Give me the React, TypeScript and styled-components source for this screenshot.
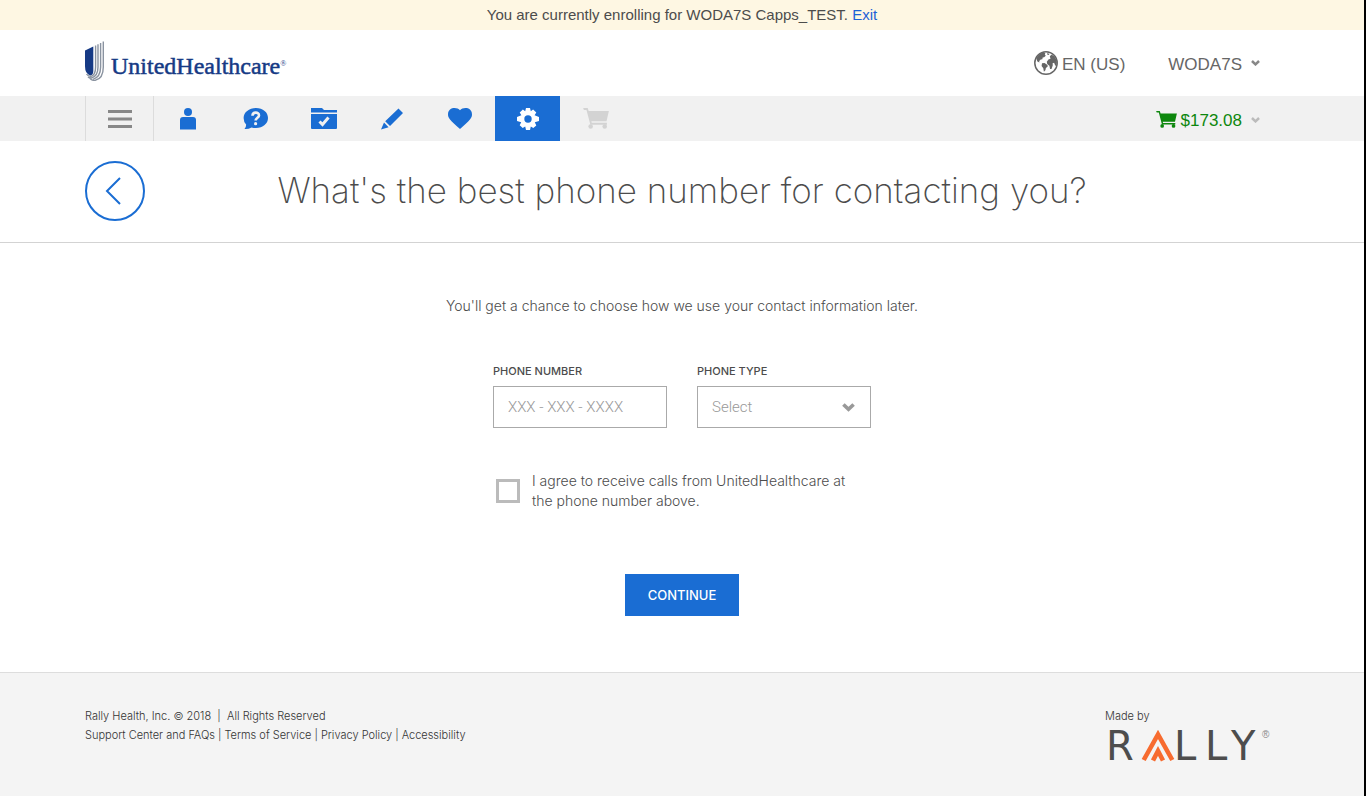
import React from 'react';
import styled, { createGlobalStyle } from 'styled-components';

const blue = '#1a6dd3';
const sans = '"Liberation Sans", Arial, sans-serif';
const light = 'Inter, "Liberation Sans", sans-serif';

const GlobalStyle = createGlobalStyle`
  *, *::before, *::after { box-sizing: border-box; }
  body { margin: 0; background: #fff; color: #4c4c4c; font-family: ${sans}; }
`;

const Page = styled.div`
  min-height: 100vh;
  display: flex;
  flex-direction: column;
  border-right: 2px solid #000;
`;

const Container = styled.div`
  width: 100%;
  max-width: 1234px;
  margin: 0 auto;
  padding: 0 20px;
  display: flex;
`;

const Banner = styled.div`
  height: 30px;
  line-height: 30px;
  background: #fef7e3;
  text-align: center;
  font-size: 15px;
`;

const BannerLink = styled.a`
  color: #1d62d6;
  text-decoration: none;
`;

const HeaderRow = styled(Container)`
  height: 66px;
  align-items: center;
`;

const Brand = styled.a`
  display: flex;
  align-items: center;
  gap: 7px;
  margin-bottom: 4px;
  color: #163a85;
  text-decoration: none;
  font: 24px/32px "Liberation Serif", serif;
  -webkit-text-stroke: 0.5px #163a85;
`;

const BrandName = styled.span`
  padding-top: 10px;
  sup { font-size: 8px; line-height: 8px; vertical-align: 8px; -webkit-text-stroke: 0; }
`;

const HeaderActions = styled.div`
  margin-left: auto;
  margin-right: 19px;
  display: flex;
  align-items: center;
  gap: 43px;
`;

const TextButton = styled.button<{ $tone: string; $gap: number }>`
  display: flex;
  align-items: center;
  gap: ${(p) => p.$gap}px;
  padding: 0;
  border: 0;
  background: none;
  color: ${(p) => p.$tone};
  font: 17px/20px ${sans};
  cursor: pointer;
`;

const ButtonText = styled.span`
  padding-top: 3px;
`;

const NavBar = styled.nav`
  background: #f1f1f1;
`;

const NavRow = styled(Container)`
  height: 45px;
`;

const NavItem = styled.button<{ $active?: boolean; $muted?: boolean }>`
  width: 65px;
  margin-right: 3px;
  padding: 0;
  border: 0;
  display: flex;
  align-items: center;
  justify-content: center;
  background: ${(p) => (p.$active ? blue : 'transparent')};
  color: ${(p) => (p.$active ? '#fff' : p.$muted ? '#d3d3d3' : blue)};
  cursor: pointer;
`;

const MenuItem = styled(NavItem)`
  width: 69px;
  margin-right: 1px;
  border: solid #dcdcdc;
  border-width: 0 1px;
  color: #888;
`;

const CartSummary = styled.div`
  margin-left: auto;
  margin-right: 19px;
  padding-top: 2px;
  display: flex;
`;

const CartTotal = styled.span`
  display: flex;
  align-items: center;
  gap: 4px;
`;

const TitleBar = styled.div`
  border-bottom: 1px solid #d3d3d3;
`;

const TitleRow = styled(Container)`
  height: 101px;
  padding-bottom: 1px;
  align-items: center;
`;

const BackButton = styled.button`
  width: 60px;
  height: 60px;
  padding: 0 4px 0 0;
  border: 2px solid ${blue};
  border-radius: 50%;
  background: #fff;
  color: ${blue};
  display: flex;
  align-items: center;
  justify-content: center;
  cursor: pointer;
`;

const Title = styled.h1`
  flex: 1;
  margin: 0 60px 2px 0;
  text-align: center;
  font: 200 35px/48px ${light};
`;

const Main = styled.main`
  flex: 1;
  display: flex;
  flex-direction: column;
  align-items: center;
  padding: 51px 20px 56px;
`;

const Intro = styled.p`
  margin: 0;
  font: 300 14px/24px ${light};
`;

const Form = styled.form`
  width: 100%;
  max-width: 378px;
  margin-top: 43px;
  display: flex;
  flex-direction: column;
`;

const Fields = styled.div`
  display: grid;
  grid-template-columns: 1fr 1fr;
  gap: 30px;
`;

const Field = styled.div`
  position: relative;
  display: flex;
  flex-direction: column;
`;

const Label = styled.label`
  font: 500 11px/20px ${light};
  text-transform: uppercase;
  margin-bottom: 5px;
`;

const control = `
  width: 100%;
  height: 42px;
  padding: 0 14px;
  border: 1px solid #aaa;
  border-radius: 0;
  background: #fff;
  color: #999;
  font: 300 15px/20px Roboto, sans-serif;
`;

const TextInput = styled.input`
  ${control}
  &::placeholder { color: #999; opacity: 1; }
`;

const Select = styled.select`
  ${control}
  appearance: none;
`;

const SelectArrow = styled.span`
  position: absolute;
  right: 16px;
  bottom: 16px;
  display: flex;
  color: #999;
  pointer-events: none;
`;

const Consent = styled.label`
  margin: 43px 0 0 3px;
  padding-right: 16px;
  display: flex;
  align-items: center;
  gap: 12px;
  font: 300 14px/20px ${light};
`;

const Checkbox = styled.input`
  appearance: none;
  flex: none;
  width: 24px;
  height: 24px;
  margin: 0;
  border: 3px solid #bbb;
  background: #fff;
  &:checked { background: ${blue}; }
`;

const Submit = styled.button`
  align-self: center;
  margin-top: 63px;
  width: 114px;
  height: 42px;
  padding: 0;
  border: 0;
  background: ${blue};
  color: #fff;
  font: 500 13px/20px ${light};
  text-transform: uppercase;
  cursor: pointer;
`;

const Footer = styled.footer`
  min-height: 124px;
  background: #f4f4f4;
  border-top: 1px solid #ddd;
  color: #333;
  font: 300 11px/19px ${light};
`;

const FooterRow = styled(Container)`
  padding-top: 34px;
  justify-content: space-between;
`;

const FooterLinks = styled.div`
  display: flex;
  gap: 3px;
`;

const FooterLink = styled.a`
  color: inherit;
  text-decoration: none;
`;

const MadeBy = styled.div`
  width: 174px;
  display: flex;
  flex-direction: column;
`;

const Chevron = ({ width = 9, color = 'currentColor' }: { width?: number; color?: string }) => (
  <svg width={width} height={(width * 2) / 3} viewBox="0 0 12 8" aria-hidden="true">
    <path d="M1.3 1.4 6 5.8 10.7 1.4" fill="none" stroke={color} strokeWidth="3.4" />
  </svg>
);

const Cart = ({ width }: { width: number }) => (
  <svg width={width} height={width * 0.8} viewBox="0 0 26 21" fill="currentColor" aria-hidden="true">
    <path d="M0 0h4.600l1 3H26l-2.400 10.500H8.300l.4 1.500H24v2H7.300L3.400 2H.8z" />
    <circle cx="7.600" cy="18.700" r="2.300" />
    <circle cx="21.800" cy="18.700" r="2.300" />
  </svg>
);

const Shield = () => (
  <svg width="19" height="40" viewBox="0 0 19 40" aria-hidden="true">
    <path d="M0 9.500 8.300 5.500V30q0 4-3 4.500Q0 33 0 25z" fill="#163a85" />
    <g fill="none" stroke="#8a93a0" strokeWidth="1.400">
      <path d="M10.600 4.500V26q0 8-4.600 9.300Q3 35.500 1.500 33" />
      <path d="M13 3.200V26q0 9-6.500 11Q4 37 3 36" />
      <path d="M15.600 2V26q0 10-7.600 12.300" />
      <path d="M18.300.5V26q0 12-8.500 13.400-3 .2-5-2" />
    </g>
  </svg>
);

const Globe = () => (
  <svg width="24" height="24" viewBox="0 0 24 24" aria-hidden="true">
    <circle cx="12" cy="12" r="11.200" fill="none" stroke="currentColor" strokeWidth="1.500" />
    <g fill="currentColor">
      <path d="M2.200 7.500 4.500 4 8 1.800l3.400.2-.6 1.600 1 1.200-1.700 1.400-1.400.2-.4 1.800-1.600.2-1.500 1.600.2 1.400-2-.8z" />
      <path d="M8 12.300l2.500-.3 3 2 .2 1.400-1.800 1.500-.5 2.300-1.500 1.500-.6-3.400-1.700-2.400z" />
      <path d="M13 2.200l2.500.6-.7 1.200-1.600-.4z" />
      <path d="M15.800 5.200l1.600-1.400 2.500.9 2 3 1 4-.8 3.300-1-.7-1-2.600-1.500.6.2 2-1.300 3.600-1.400.2-.7-3.300-2.200-1.700-.4-2.400 1.600-2.200 2.100-.7z" />
    </g>
  </svg>
);

const LogoSvg = styled.svg`
  overflow: visible;
`;

const RallyLogo = () => (
  <LogoSvg width="170" height="36" viewBox="0 0 170 36" role="img" aria-label="Rally">
    <g fill="#4d4d4d" fontFamily="DejaVu Sans, sans-serif" fontSize="40" fontWeight="400">
      <text x="1" y="34">R</text>
      <text x="69" y="34">L</text>
      <text x="100" y="34">L</text>
      <text x="126" y="34">Y</text>
    </g>
    <g fill="none" stroke="#f76b2f">
      <path d="M38.700 34 53 8.500 67.300 34" strokeWidth="4.600" />
      <path d="M48 34.500l5-9.500 5 9.500" strokeWidth="4.600" />
    </g>
    <text x="157" y="12" fill="#888" fontSize="10" fontFamily="Liberation Sans, sans-serif">®</text>
  </LogoSvg>
);

export default function App() {
  return (
    <Page>
      <GlobalStyle />
      <Banner>
        You are currently enrolling for WODA7S Capps_TEST. <BannerLink href="#exit">Exit</BannerLink>
      </Banner>
      <header>
        <HeaderRow>
          <Brand href="#home">
            <Shield />
            <BrandName>UnitedHealthcare<sup>®</sup></BrandName>
          </Brand>
          <HeaderActions>
            <TextButton $tone="#666" $gap={4}><Globe /><ButtonText>EN (US)</ButtonText></TextButton>
            <TextButton $tone="#666" $gap={9}><ButtonText>WODA7S</ButtonText><Chevron color="#888" /></TextButton>
          </HeaderActions>
        </HeaderRow>
      </header>
      <NavBar>
        <NavRow>
          <MenuItem aria-label="Menu">
            <svg width="24" height="18" viewBox="0 0 24 18" fill="currentColor"><path d="M0 0h24v3H0zM0 7.500h24v3H0zM0 15h24v3H0z" /></svg>
          </MenuItem>
          <NavItem aria-label="Profile">
            <svg width="16" height="22" viewBox="0 0 16 22" fill="currentColor"><circle cx="8" cy="4" r="4" /><path d="M0 21.500V12q0-3 3-3h10q3 0 3 3v9.500z" /></svg>
          </NavItem>
          <NavItem aria-label="Help">
            <svg width="25" height="22" viewBox="0 0 25 22"><path d="M13 0c7 0 12 4.400 12 10s-5 10-12 10q-2.500 0-4.500-.6Q5.500 21.300 1.500 21q1.800-2 1.600-4.500Q.6 13.800.6 10C.6 4.400 6 0 13 0z" fill="currentColor" /><path d="M9.500 7.700C9.500 3.700 16 3.700 16 7.400c0 2.300-3.400 2.400-3.400 5.200" fill="none" stroke="#f1f1f1" strokeWidth="2.600" /><circle cx="12.600" cy="15.700" r="1.600" fill="#f1f1f1" /></svg>
          </NavItem>
          <NavItem aria-label="Plans">
            <svg width="26" height="22" viewBox="0 0 26 22"><path d="M0 0h11l2 2h13v2.500H0zM0 6h26v14q0 1-1 1H1q-1 0-1-1z" fill="currentColor" /><path d="M8.500 13.500l3 3 6-7" fill="none" stroke="#f1f1f1" strokeWidth="3" /></svg>
          </NavItem>
          <NavItem aria-label="Edit">
            <svg width="22" height="22" viewBox="0 0 22 22" fill="currentColor"><path d="M17.500.5 22 5 9 18 4.200 13.200zM3 14.600l4.600 4.600L0 21.500z" /></svg>
          </NavItem>
          <NavItem aria-label="Health">
            <svg width="24" height="21" viewBox="0 0 24 21" fill="currentColor"><path d="M12 2.300C15-1.200 24-1 24 6.500c0 3.500-2 5.500-12 14.500C2 12 0 10 0 6.500 0-1 9-1.200 12 2.300z" /></svg>
          </NavItem>
          <NavItem $active aria-label="Settings">
            <svg width="22" height="22" viewBox="0 0 22 22"><path d="M9 0h4l.8 3.200 2.300-1.700 3.200 3-1.700 2.700 4.400 1.800v4l-4.200 1.200 1.500 3.200-3 2.500-2.500-1.500L13 22H9l-.8-3.600-2.500 1.500-3-2.600 1.500-3.100L0 13V9l4.400-1.800-1.700-2.700 3.200-3 2.300 1.700z" fill="currentColor" /><circle cx="11" cy="11" r="3.700" fill={blue} /></svg>
          </NavItem>
          <NavItem $muted aria-label="Cart"><Cart width={26} /></NavItem>
          <CartSummary>
            <TextButton $tone="#0d870d" $gap={9}>
              <CartTotal><Cart width={21} /><ButtonText>$173.08</ButtonText></CartTotal>
              <Chevron color="#bbb" />
            </TextButton>
          </CartSummary>
        </NavRow>
      </NavBar>
      <TitleBar>
        <TitleRow>
          <BackButton aria-label="Back">
            <svg width="16" height="28" viewBox="0 0 16 28"><path d="M15 1 2 14l13 13" fill="none" stroke="currentColor" strokeWidth="2" /></svg>
          </BackButton>
          <Title>What's the best phone number for contacting you?</Title>
        </TitleRow>
      </TitleBar>
      <Main>
        <Intro>You'll get a chance to choose how we use your contact information later.</Intro>
        <Form>
          <Fields>
            <Field>
              <Label htmlFor="phone">Phone Number</Label>
              <TextInput id="phone" type="tel" placeholder="XXX - XXX - XXXX" />
            </Field>
            <Field>
              <Label htmlFor="type">Phone Type</Label>
              <Select id="type" defaultValue=""><option value="">Select</option></Select>
              <SelectArrow><Chevron width={13} /></SelectArrow>
            </Field>
          </Fields>
          <Consent>
            <Checkbox type="checkbox" />
            <span>I agree to receive calls from UnitedHealthcare at the phone number above.</span>
          </Consent>
          <Submit type="button">Continue</Submit>
        </Form>
      </Main>
      <Footer>
        <FooterRow>
          <div>
            <div>Rally Health, Inc. © 2018 &nbsp;|&nbsp; All Rights Reserved</div>
            <FooterLinks>
              <FooterLink href="#support">Support Center and FAQs</FooterLink>|
              <FooterLink href="#terms">Terms of Service</FooterLink>|
              <FooterLink href="#privacy">Privacy Policy</FooterLink>|
              <FooterLink href="#accessibility">Accessibility</FooterLink>
            </FooterLinks>
          </div>
          <MadeBy>
            Made by
            <RallyLogo />
          </MadeBy>
        </FooterRow>
      </Footer>
    </Page>
  );
}
